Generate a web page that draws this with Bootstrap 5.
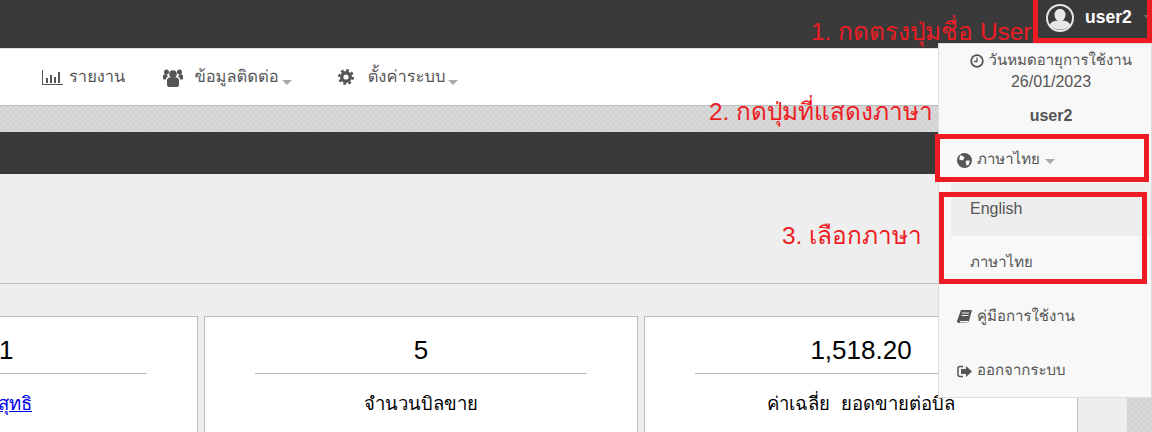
<!DOCTYPE html>
<html lang="th">
  <head>
    <meta charset="UTF-8" />
    <title>ตั้งค่าภาษา</title>
    <meta name="viewport" content="width=device-width, initial-scale=1" />
    <link href="https://cdn.jsdelivr.net/npm/bootstrap@5.3.0/dist/css/bootstrap.min.css" rel="stylesheet" />
    <style>
      html, body { height: 432px; overflow: hidden; }
      body { font-family: "Liberation Sans", "Noto Sans", sans-serif; font-size: 14px; color: #555; position: relative; background-color: #d6d6d6; background-image: repeating-conic-gradient(#d2d2d2 0 25%, #d9d9d9 0 50%); background-size: 6px 6px; }
      .top-bar { height: 49px; background: #3a3a3a; border-bottom: 1px solid #ddd; }
      .user-btn { width: 112px; height: 32px; color: #fff; font-size: 17.500px; font-weight: 700; padding: 3px 0 0 6px; gap: 11px; }
      .user-caret, .nav-caret { border-left: 5px solid transparent; border-right: 5px solid transparent; border-top: 5px solid #aaa; display: inline-block; }
      .user-btn .user-caret { border-top-color: #777; border-left-width: 4px; border-right-width: 4px; margin-left: 1px; }
      .menu-bar { height: 57px; background: #fff; border-bottom: 1px solid #bbb; padding-left: 42px; color: #555; gap: 38px; }
      .menu-bar .nav-link { color: #555; padding: 0; font-size: 16.500px; text-rendering: geometricPrecision; display: flex; align-items: center; gap: 6px; }
      .menu-bar .nav-caret { align-self: flex-end; margin: 0 0 4px -3px; }
      .menu-bar .nav-link:last-child { margin-left: 8px; }
      .users-icon { margin-right: 5px; }
      .band { height: 26px; }
      .title-bar { height: 42px; background: #3a3a3a; }
      .main-col { width: 1127px; background: #eee; height: 258px; overflow: hidden; }
      .head-area { height: 110px; border-bottom: 1px solid #bbb; }
      .stat-row { margin: 32px 0 0 -236px; gap: 6px; }
      .stat-card { width: 434px; flex: none; height: 200px; border: 1px solid #bbb; border-radius: 0; padding: 14px 50px 0; color: #000; text-align: center; }
      .stat-num { font-size: 26px; line-height: 38px; }
      .stat-card hr { margin: 4px 0 18px; border-top: 1px solid #bbb; opacity: 1; }
      .stat-label { font-size: 18.500px; line-height: 24px; word-spacing: 6px; }
      .stat-label a { color: #00e; }
      .user-menu { display: block; position: absolute; left: 938px; top: 43px; width: 214px; height: 355px; background: #f8f8f8; border: 1px solid #ddd; border-radius: 0; padding: 0; color: #555; margin: 0; z-index: 5; }
      .th-text { font-size: 15px; text-rendering: geometricPrecision; }
      .expire-box { padding: 5px 0 0 12px; line-height: 21px; text-align: center; }
      .user-name { font-weight: 700; text-align: center; margin-top: 14px; padding-left: 12px; line-height: 20px; }
      .menu-row { height: 54px; padding: 0 18px; display: flex; align-items: center; gap: 5px; color: #555; }
      .lang-row { margin-top: 9px; height: 48px; padding-top: 2px; }
      .lang-row .nav-caret { margin-left: 0; margin-top: 3px; }
      .lang-item { height: 54px; margin-left: 12px; padding: 0 19px; color: #555; display: flex; align-items: center; }
      .lang-item.active-lang { background: #eee; height: 53px; padding-bottom: 2px; }
      .note-red { position: absolute; color: #ed1c24; font-size: 24.400px; line-height: 30px; white-space: nowrap; z-index: 6; }
      .box-red { position: absolute; border: 5px solid #ed1c24; z-index: 6; }
    </style>
  </head>
  <body>
    <div class="top-bar d-flex justify-content-end">
      <div class="user-btn d-flex align-items-center">
        <svg width="28" height="28" viewBox="0 0 28 28"><circle cx="14" cy="14" r="14" fill="#e6e6e6" /><circle cx="14" cy="14" r="12" fill="#3a3a3a" /><ellipse cx="14" cy="11" rx="5.500" ry="6.300" fill="#e6e6e6" /><path d="M3.500 21c2-4 6-4.500 10.500-4.500s8.500 .5 10.500 4.500c-2.500 3-6 4.800-10.500 4.800s-8-1.800-10.500-4.800z" fill="#e6e6e6" /></svg>
        <span>user2</span><span class="user-caret"></span>
      </div>
    </div>
    <nav class="menu-bar d-flex align-items-center">
      <a class="nav-link" href="#"><svg width="21" height="15" viewBox="0 0 21 15"><path d="M0 0h1v14h20v1H0z" fill="#555" /><path d="M4 8h2v5H4zM8 5h2v8H8zM12 7h2v6h-2zM16 2h2v11h-2z" fill="#555" /></svg>รายงาน</a>
      <a class="nav-link" href="#"><svg width="20" height="19" viewBox="0 0 20 19" class="users-icon"><g fill="#555"><circle cx="10" cy="6" r="3.800" /><circle cx="3.500" cy="4" r="2.500" /><circle cx="16.500" cy="4" r="2.500" /><path d="M4 12c0-2 2-3 6-3s6 1 6 3v5c0 1-1 2-2 2H6c-1 0-2-1-2-2z" /><path d="M0 8c0-1 1-2 3.500-2 .5 1 1 2 1.500 2.500-1.500.5-2 1.500-2 3H1c-.5 0-1-.5-1-1zM20 8c0-1-1-2-3.500-2-.5 1-1 2-1.500 2.500 1.500.5 2 1.500 2 3h2c.5 0 1-.5 1-1z" /></g></svg>ข้อมูลติดต่อ<span class="nav-caret"></span></a>
      <a class="nav-link" href="#"><svg width="16" height="16" viewBox="0 0 16 16" class="me-2"><circle cx="8" cy="8" r="4.300" fill="none" stroke="#555" stroke-width="3.400" /><circle cx="8" cy="8" r="6.800" fill="none" stroke="#555" stroke-width="2.400" stroke-dasharray="2.700 2.640" /></svg>ตั้งค่าระบบ<span class="nav-caret"></span></a>
    </nav>
    <div class="band"></div>
    <div class="title-bar"></div>
    <div class="main-col">
      <div class="head-area"></div>
      <div class="stat-row d-flex">
        <div class="card stat-card">
          <div class="stat-num">7,591</div>
          <hr />
          <div class="stat-label"><a href="#">ยอดขายสุทธิ</a></div>
        </div>
        <div class="card stat-card">
          <div class="stat-num">5</div>
          <hr />
          <div class="stat-label">จำนวนบิลขาย</div>
        </div>
        <div class="card stat-card">
          <div class="stat-num">1,518.20</div>
          <hr />
          <div class="stat-label">ค่าเฉลี่ย ยอดขายต่อบิล</div>
        </div>
      </div>
    </div>

    <div class="dropdown-menu user-menu">
      <div class="expire-box">
        <svg width="14" height="14" viewBox="0 0 14 14"><circle cx="7" cy="7" r="5.800" fill="none" stroke="#555" stroke-width="1.800" /><path d="M7 3.500V7.500H4" fill="none" stroke="#555" stroke-width="1.300" /></svg>
        <span class="th-text">วันหมดอายุการใช้งาน</span><br />26/01/2023
      </div>
      <div class="user-name">user2</div>
      <div class="menu-row lang-row">
        <svg width="15" height="15" viewBox="0 0 14 14"><circle cx="7" cy="7" r="7" fill="#555" /><path d="M3 2l3 1 1 2-2 2-3-1zM9 7l3 0-1 4-2 1-1-4z" fill="#f8f8f8" /></svg>
        <span class="th-text">ภาษาไทย</span><span class="nav-caret"></span>
      </div>
      <a class="lang-item active-lang text-decoration-none" href="#">English</a>
      <a class="lang-item text-decoration-none" href="#"><span class="th-text">ภาษาไทย</span></a>
      <div class="menu-row">
        <svg width="15" height="14" viewBox="0 0 15 14"><path d="M4 0h11l-3 11c-.3 1-1 2-2.500 2H2C.5 13 0 12 0 11zM3 11c-.5 1 0 1.500 1 1.500h7l.5-1.500z" fill="#555" /><path d="M5 3h7M4.500 5.500h7" stroke="#f8f8f8" /></svg>
        <span class="th-text">คู่มือการใช้งาน</span>
      </div>
      <div class="menu-row">
        <svg width="15" height="13" viewBox="0 0 15 13"><path d="M6 1.500H3C1.800 1.500 1 2.300 1 3.500v6c0 1.200.8 2 2 2h3" fill="none" stroke="#555" stroke-width="1.500" /><path d="M9 1l6 5.500L9 12V9H4V4h5z" fill="#555" /></svg>
        <span class="th-text">ออกจากระบบ</span>
      </div>
    </div>

    <div class="box-red" style="left:1033px;top:-5px;width:119px;height:48px"></div>
    <div class="box-red" style="left:935px;top:134px;width:214px;height:48px"></div>
    <div class="box-red" style="left:939px;top:192px;width:208px;height:92px"></div>
    <div class="note-red" style="left:811px;top:17px">1. กดตรงปุ่มชื่อ User</div>
    <div class="note-red" style="left:709px;top:97px">2. กดปุ่มที่แสดงภาษา</div>
    <div class="note-red" style="left:782px;top:221px">3. เลือกภาษา</div>
    <script src="https://cdn.jsdelivr.net/npm/bootstrap@5.3.0/dist/js/bootstrap.bundle.min.js"></script>
  </body>
</html>
